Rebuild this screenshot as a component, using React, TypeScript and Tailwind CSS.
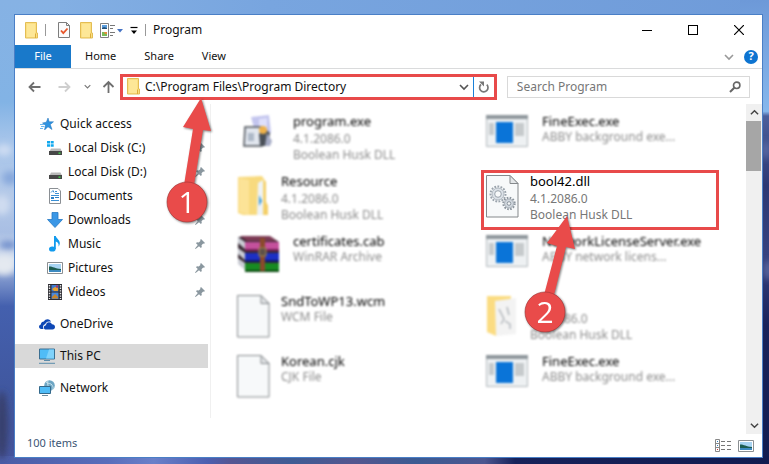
import type { ReactNode } from "react";

function Wallpaper() {
  return (
    <svg className="absolute inset-0 h-full w-full" viewBox="0 0 769 464" preserveAspectRatio="none" aria-hidden="true">
      <defs>
        <linearGradient id="sky" x1="0" y1="0" x2="1" y2="0">
          <stop offset="0" stopColor="#86b2e4" />
          <stop offset="0.35" stopColor="#78a5df" />
          <stop offset="1" stopColor="#6f9bd9" />
        </linearGradient>
        <linearGradient id="west" x1="0" y1="0" x2="0" y2="1">
          <stop offset="0" stopColor="#86b2e4" />
          <stop offset="0.22" stopColor="#82b3e5" />
          <stop offset="0.3" stopColor="#a5c4ea" />
          <stop offset="0.42" stopColor="#b4c9e8" />
          <stop offset="0.5" stopColor="#a9bfe4" />
          <stop offset="0.56" stopColor="#d5dfee" />
          <stop offset="0.6" stopColor="#7f97cd" />
          <stop offset="0.66" stopColor="#4460ae" />
          <stop offset="0.85" stopColor="#40579f" />
          <stop offset="1" stopColor="#46549c" />
        </linearGradient>
        <linearGradient id="east" x1="0" y1="0" x2="0" y2="1">
          <stop offset="0" stopColor="#6d99d8" />
          <stop offset="0.24" stopColor="#86b7ec" />
          <stop offset="0.25" stopColor="#4c5f9b" />
          <stop offset="0.4" stopColor="#2c3874" />
          <stop offset="0.55" stopColor="#36427f" />
          <stop offset="0.7" stopColor="#18235c" />
          <stop offset="1" stopColor="#121c50" />
        </linearGradient>
        <linearGradient id="ground" x1="0" y1="0" x2="1" y2="0">
          <stop offset="0" stopColor="#4a5ca6" />
          <stop offset="0.14" stopColor="#586dbb" />
          <stop offset="0.2" stopColor="#6a80c9" />
          <stop offset="0.27" stopColor="#4c5fb0" />
          <stop offset="0.3" stopColor="#555693" />
          <stop offset="0.38" stopColor="#3f5c94" />
          <stop offset="0.46" stopColor="#54568f" />
          <stop offset="0.54" stopColor="#3c5b92" />
          <stop offset="0.63" stopColor="#4c5690" />
          <stop offset="0.67" stopColor="#17225a" />
          <stop offset="1" stopColor="#111b50" />
        </linearGradient>
        <filter id="haze" x="-50%" y="-50%" width="200%" height="200%">
          <feGaussianBlur stdDeviation="3" />
        </filter>
      </defs>
      <rect width="769" height="464" fill="url(#sky)" />
      <rect width="60" height="464" fill="url(#west)" />
      <rect x="740" width="29" height="464" fill="url(#east)" />
      <rect y="456" width="769" height="8" fill="url(#ground)" />
      <g filter="url(#haze)">
        <ellipse cx="4" cy="150" rx="8" ry="6" fill="#cddcf2" />
        <ellipse cx="10" cy="178" rx="8" ry="7" fill="#88a9dc" />
        <ellipse cx="2" cy="205" rx="8" ry="10" fill="#cfdcf0" />
        <ellipse cx="8" cy="245" rx="9" ry="4" fill="#6d8ccb" />
        <ellipse cx="4" cy="265" rx="12" ry="10" fill="#e4e9f0" />
        <ellipse cx="2" cy="425" rx="6" ry="34" fill="#39406d" />
        <ellipse cx="766" cy="150" rx="4" ry="9" fill="#5a6aa5" />
        <ellipse cx="768" cy="270" rx="5" ry="10" fill="#56649c" />
      </g>
    </svg>
  );
}

function Folder() {
  return (
    <svg className="h-[17px] w-[13px] shrink-0" viewBox="0 0 13 17" aria-hidden="true">
      <path d="M.5.5h11v10.5h1v5H.5z" fill="#fbdf81" stroke="#e3bd54" />
      <path d="M2 2h8v13H2z" fill="#fde797" />
      <path d="M10.5 11.5v4.5" stroke="#dcae3c" />
    </svg>
  );
}

function CheckedPage() {
  return (
    <svg className="h-4 w-3" viewBox="0 0 12 16" aria-hidden="true">
      <path d="M.5.5h8l3 3v12H.5z" fill="#fbfbfb" stroke="#7d7d7d" />
      <path d="M8.500.500v3h3" fill="none" stroke="#7d7d7d" />
      <path d="M3 8.500l2.300 2.700L9.500 6.500" fill="none" stroke="#e8562a" strokeWidth="1.800" />
    </svg>
  );
}

function LayoutPicker() {
  return (
    <svg className="h-[15px] w-[23px]" viewBox="0 0 23 15" aria-hidden="true">
      <path d="M.5.5h8v14h-8z" fill="#fff" stroke="#808080" />
      <path d="M2 2h5v4H2z" fill="#5b9ddd" />
      <path d="M2 5l2-1 3 1v1H2z" fill="#24527a" />
      <path d="M2 9h5v4H2z" fill="#7dbb57" />
      <path d="M4 9h3v2H5z" fill="#e58b3a" />
      <path d="M10 2.500h5M10 5.500h3M10 9.500h5M10 12.500h3" stroke="#777" />
      <path d="M17 6h6l-3 3.500z" fill="#4472c4" />
    </svg>
  );
}

function Chevron({ up = false, size, color }: { up?: boolean; size: number; color: string }) {
  return (
    <svg width={size} height={size} viewBox="0 0 10 10" aria-hidden="true">
      <path d={up ? "M1 7l4-4 4 4" : "M1 3l4 4 4-4"} fill="none" stroke={color} strokeWidth="1.600" />
    </svg>
  );
}

function ArrowIcon({ kind, color }: { kind: "left" | "right" | "up"; color: string }) {
  const d = { left: "M12.500 7H1.500M6 2.500L1.500 7 6 11.500", right: "M.5 7h11M7 2.500L11.500 7 7 11.500", up: "M6.500 13V2M1.500 7l5-5 5 5" };
  return (
    <svg className="h-3.5 w-[13px]" viewBox="0 0 13 14" aria-hidden="true">
      <path d={d[kind]} fill="none" stroke={color} strokeWidth="1.800" />
    </svg>
  );
}

function Star() {
  return (
    <svg className="h-3 w-3.5" viewBox="0 0 14 12" aria-hidden="true">
      <path d="M8 0l1.200 3.800H13.500L10.300 6.500 12 11.500 8 8.800 4.500 12l1-4.700L2.500 5l3.800-.8z" fill="#2f93e0" stroke="#1b6fb8" strokeWidth=".5" />
      <path d="M0 6.500h4M1 8.500h3.500M0 10.500h3" stroke="#6bb7ee" />
    </svg>
  );
}

function Disk({ system = false }: { system?: boolean }) {
  return (
    <svg className="h-4 w-4" viewBox="0 0 16 16" aria-hidden="true">
      {system && <path d="M0 1h3v2.500H0zM3.700 1h3v2.500h-3zM0 4.300h3v2.500H0zM3.700 4.300h3v2.500h-3z" fill="#10a8ee" />}
      <path d="M4 8.500h9.500l1.500 3H2.500z" fill="#b9b9b9" />
      <path d="M2 11h13v4H2z" fill="#474747" />
      <path d="M11.500 12.500h2v1.300h-2z" fill="#3fe04a" />
    </svg>
  );
}

function DocumentIcon() {
  return (
    <svg className="h-4 w-4" viewBox="0 0 16 16" aria-hidden="true">
      <path d="M2.500.500h8.500l2.500 2.500v12.500h-11z" fill="#fff" stroke="#8a8f94" />
      <path d="M4 4.500l2-2 1 2M8 3.500h2M8 5.500h4M4 7.500h8M4 12.500h8" fill="none" stroke="#3a8fd4" />
      <path d="M4 9h3v2H4zM8 9h4v1H8z" fill="#2a7fc8" />
    </svg>
  );
}

function DownloadIcon() {
  return (
    <svg className="h-4 w-4" viewBox="0 0 16 16" aria-hidden="true">
      <path d="M5 .5h6v7h4.500L8 15.500.500 7.500H5z" fill="#3a97e6" stroke="#2579c4" strokeWidth=".8" />
    </svg>
  );
}

function MusicIcon() {
  return (
    <svg className="h-4 w-4" viewBox="0 0 16 16" aria-hidden="true">
      <ellipse cx="5.300" cy="13" rx="3.300" ry="2.600" fill="#129bee" />
      <path d="M7 0h1.800c.5 2.600 4.300 4 4 7.500-.1 1.600-1 2.700-1.300 3 .6-2.600-.3-4-2.700-5V13H7z" fill="#129bee" />
    </svg>
  );
}

function PictureIcon() {
  return (
    <svg className="h-4 w-4" viewBox="0 0 16 14" aria-hidden="true">
      <path d="M.5 1.500h15v11H.5z" fill="#fff" stroke="#8b8f92" />
      <path d="M2 3h12v8H2z" fill="#a8d4f2" />
      <path d="M2 5.500c4 0 6 2 12 2.500v1H2z" fill="#1c5c50" />
      <path d="M2 9h12v2H2z" fill="#3d8ac0" />
    </svg>
  );
}

function VideoIcon() {
  return (
    <svg className="h-4 w-4" viewBox="0 0 16 16" aria-hidden="true">
      <path d="M1 0h14v16H1z" fill="#2d2d33" />
      <path d="M4.500 1h7v6.500h-7z" fill="#3f7bd0" />
      <path d="M4.500 8.500h7V15h-7z" fill="#4a89dc" />
      <path d="M5 5l3-2 3 1v3H7z" fill="#e7a130" />
      <path d="M5 13l3-3 3 3v1.500H5z" fill="#c8862c" />
      <path d="M9 1.500h2v2H9z" fill="#b3315f" />
      <path d="M2.500 1v14M13.500 1v14" stroke="#e8e8e8" strokeWidth="1.400" strokeDasharray="1.400 1.200" />
    </svg>
  );
}

function CloudIcon() {
  return (
    <svg className="h-4 w-4" viewBox="0 0 16 16" aria-hidden="true">
      <path d="M4.500 13H2.300C.8 13 0 12 0 10.800 0 9.500.900 8.700 1.900 8.500c0-2 1.500-3 3-3C5.800 4 7 3.300 8.500 3.300c1.800 0 3 1 3.500 2.400-4-.8-5.300 1-5.700 2.500C4 8.500 3.500 11 4.500 13z" fill="#0d47b5" />
      <path d="M7 13.500c-1.300 0-2.200-.9-2.200-2.100 0-1.300 1-2.100 2.200-2.200.1-1.800 1.400-3 3-3 1.500 0 2.500.8 2.900 2.100 1.700-.1 3.100 1 3.100 2.700 0 1.500-1 2.500-2.500 2.500z" fill="#0d47b5" />
    </svg>
  );
}

function MonitorIcon() {
  return (
    <svg className="h-4 w-4" viewBox="0 0 16 16" aria-hidden="true">
      <path d="M.5 1h15v10H.5z" fill="#4fbcf7" stroke="#3a6f92" />
      <path d="M10 1.500h5v9H7z" fill="#7fd2fb" />
      <path d="M5 12.500h6M0 15.300h16" stroke="#5b8cab" />
    </svg>
  );
}

function NetworkIcon() {
  return (
    <svg className="h-4 w-4" viewBox="0 0 16 16" aria-hidden="true">
      <circle cx="10.500" cy="5.500" r="5.300" fill="#6ea6c4" />
      <path d="M7 2c2 2 5 1 6 3s2 3 0 5M9 .5c-1 3 0 6 2 10" fill="none" stroke="#c7e2ec" />
      <path d="M.5 6.500h11v7H.5z" fill="#4fbcf7" stroke="#34698b" />
      <path d="M3 15.500h6" stroke="#6d8da0" />
    </svg>
  );
}

function Pin() {
  return (
    <svg className="h-2.5 w-2.5" viewBox="0 0 10 10" aria-hidden="true">
      <path d="M6 0l4 4-1 .8-.8-.2-1.700 1.700.3 1.800-.9.900L4 7.200 .6 10l-.6-.6L2.800 6 1 4.200l.9-.9 1.800.3L5.400 1.900 5.200 1z" fill="#8a979f" />
    </svg>
  );
}

function SetupIcon() {
  return (
    <svg className="ml-1.5 h-9 w-9" viewBox="0 0 36 36" aria-hidden="true">
      <path d="M8 2l18-2 2 18-14 6z" fill="#c3c5ee" />
      <path d="M16 4l8-1v14l-8 3z" fill="#dfe0fb" />
      <path d="M2 12h17v19H1z" fill="#e1e6ee" stroke="#4c5158" strokeWidth="1.500" />
      <path d="M5 18h6v8H5z" fill="#aeb9c8" />
      <path d="M16 19l5-6 6 5-2 13h-8z" fill="#4a5058" />
      <circle cx="20" cy="15" r="4" fill="#efb24a" />
      <path d="M24 18l5 8-2 5h-5z" fill="#a6acc6" />
    </svg>
  );
}

function BigFolder({ sheets = false }: { sheets?: boolean }) {
  return sheets ? (
    <svg className="h-[42px] w-8" viewBox="0 0 32 42" aria-hidden="true">
      <path d="M1 1h24v6L10 41 1 37z" fill="#fbdc82" />
      <path d="M9 6l21-3v36l-20 2z" fill="#f3f3f3" />
      <path d="M13 14l5 10-3 5M21 12l2 8M19 26l5 3v5" fill="none" stroke="#a5abb1" strokeWidth="1.200" />
    </svg>
  ) : (
    <svg className="h-[42px] w-8" viewBox="0 0 32 42" aria-hidden="true">
      <path d="M1 2l24-1 4 6v20l2 4v9H6l-5-2z" fill="#f8da7e" />
      <path d="M2 3l10 2v35L2 37z" fill="#fce397" />
      <path d="M21 8l5-3v35h-6z" fill="#eef3f7" />
      <path d="M22 20l3 6-3 5z" fill="#3d9ad6" />
      <path d="M27 6v22l-1 12h5v-9l-2-4V7z" fill="#f4cf68" />
    </svg>
  );
}

function BooksIcon() {
  const rows = [
    { y: 7, c: "#c4519c", e: "#7a1f5c" },
    { y: 18, c: "#1d2fc4", e: "#0e1670" },
    { y: 28, c: "#188a22", e: "#0a4a10" },
  ];
  return (
    <svg className="h-[38px] w-11" viewBox="0 0 44 38" aria-hidden="true">
      <path d="M1 2h33l8 5v27H8L1 28z" fill="#3a2a34" />
      <path d="M3 1h30l7 5H10z" fill="#7d3a55" />
      {rows.map((r) => (
        <g key={r.y}>
          <path d={`M1 ${r.y - 5}l7 5v7l-7-6z`} fill="#c9ccd4" />
          <path d={`M8 ${r.y}h34v8H8z`} fill={r.c} />
          <path d={`M8 ${r.y + 7}h34v2H8z`} fill={r.e} />
        </g>
      ))}
      <path d="M23 3h5v33h-5z" fill="#8a4a2c" />
      <path d="M22 13h7v8h-7z" fill="#5d5048" stroke="#a88c50" />
    </svg>
  );
}

function Page({ children }: { children?: ReactNode }) {
  return (
    <svg className="h-[43px] w-[33px]" viewBox="0 0 33 43" aria-hidden="true">
      <path d="M.5.500h23.500l8 8v33.500H.5z" fill="#f7f9fa" stroke="#85898c" />
      <path d="M24 .5v8h8z" fill="#e3e6e8" stroke="#85898c" />
      {children}
    </svg>
  );
}

function Gears() {
  return (
    <g fill="none">
      <circle cx="12" cy="19" r="7.500" stroke="#9ba4ad" strokeWidth="2" strokeDasharray="1.800 1.340" />
      <circle cx="12" cy="19" r="6" fill="#dbe1e7" stroke="#b0b8c0" />
      <circle cx="12" cy="19" r="3.300" fill="#f7f9fa" stroke="#9ba4ad" />
      <circle cx="23" cy="28.500" r="5.700" stroke="#8c959e" strokeWidth="2" strokeDasharray="1.600 1.385" />
      <circle cx="23" cy="28.500" r="4.500" fill="#cfd6dd" stroke="#a5adb5" />
      <circle cx="23" cy="28.500" r="1.800" fill="#f7f9fa" stroke="#8c959e" />
    </g>
  );
}

function AppWindowIcon() {
  return (
    <svg className="h-8 w-[42px]" viewBox="0 0 42 32" aria-hidden="true">
      <path d="M.5.500h41v31H.5z" fill="#eef1f3" stroke="#b3b9bd" />
      <path d="M0 0h42v4H0z" fill="#8f979c" />
      <path d="M10 7h17v21H10z" fill="#0a74d8" />
      <path d="M3 8h5v12H3zM29 8h9v13h-9z" fill="#c6cacc" />
    </svg>
  );
}

const quick: { label: string; icon: ReactNode }[] = [
  { label: "Local Disk (C:)", icon: <Disk system /> },
  { label: "Local Disk (D:)", icon: <Disk /> },
  { label: "Documents", icon: <DocumentIcon /> },
  { label: "Downloads", icon: <DownloadIcon /> },
  { label: "Music", icon: <MusicIcon /> },
  { label: "Pictures", icon: <PictureIcon /> },
  { label: "Videos", icon: <VideoIcon /> },
];

function NavItem({ label, icon, active = false }: { label: string; icon: ReactNode; active?: boolean }) {
  return (
    <a href="#" className={`mr-0.5 flex h-6 items-center gap-[5px] pl-6 ${active ? "bg-[#d9d9d9]" : ""}`}>
      <span className="flex w-4 justify-center">{icon}</span>
      {label}
    </a>
  );
}

type Entry = { name: string; lines: string[]; icon: ReactNode; wide?: boolean; selected?: boolean };

const entries: Entry[] = [
  { name: "program.exe", lines: ["4.1.2086.0", "Boolean Husk DLL"], icon: <SetupIcon />, wide: true },
  { name: "FineExec.exe", lines: ["ABBY background exe..."], icon: <AppWindowIcon />, wide: true },
  { name: "Resource", lines: ["4.1.2086.0", "Boolean Husk DLL"], icon: <BigFolder /> },
  { name: "bool42.dll", lines: ["4.1.2086.0", "Boolean Husk DLL"], icon: <Page><Gears /></Page>, selected: true },
  { name: "certificates.cab", lines: ["WinRAR Archive"], icon: <BooksIcon />, wide: true },
  { name: "NetworkLicenseServer.exe", lines: ["ABBY network licens..."], icon: <AppWindowIcon />, wide: true },
  { name: "SndToWP13.wcm", lines: ["WCM File"], icon: <Page /> },
  { name: "", lines: ["4.1.2086.0", "Boolean Husk DLL"], icon: <BigFolder sheets /> },
  { name: "Korean.cjk", lines: ["CJK File"], icon: <Page /> },
  { name: "FineExec.exe", lines: ["ABBY background exe..."], icon: <AppWindowIcon />, wide: true },
];

function Tile({ entry, children }: { entry: Entry; children?: ReactNode }) {
  const { name, lines, icon, wide, selected } = entry;
  return (
    <li className={`relative flex h-[60px] border-[3px] pl-0.5 whitespace-nowrap ${selected ? "z-10 border-[#e84a4a] text-[#777]" : "border-transparent text-[#8c8c8c] blur-[1px]"}`}>
      <span className={`shrink-0 pt-0.5 ${wide ? "w-14" : "w-11"}`}>{icon}</span>
      <div className="text-[12px] leading-4">
        <p className="h-4 text-[13px] text-black">{name}</p>
        {lines.map((line, i) => (
          <p key={line} className={i === 0 && lines.length > 1 ? "mt-0.5" : ""}>{line}</p>
        ))}
      </div>
      {children}
    </li>
  );
}

function AddressPointer() {
  return (
    <svg className="pointer-events-none absolute top-[14px] left-[37px] h-[140px] w-[60px] drop-shadow-[1px_1px_1px_rgba(0,0,0,0.5)]" viewBox="160 90 60 140" role="img" aria-label="Step 1">
      <path d="M201 97l10 33-8-1-9 55h-10l9-56-10-2z" fill="#e94b4a" />
      <circle cx="187" cy="201" r="20" fill="#e94b4a" stroke="#a03434" strokeWidth=".6" />
      <text x="187" y="212" textAnchor="middle" className="fill-white font-['Open_Sans'] text-[30px]">1</text>
    </svg>
  );
}

function FilePointer() {
  return (
    <svg className="pointer-events-none absolute top-[37px] left-[31px] h-[130px] w-[70px] drop-shadow-[1px_1px_1px_rgba(0,0,0,0.5)]" viewBox="515 210 70 130" role="img" aria-label="Step 2">
      <path d="M567 216l8 33-9-2-12 48h-10l13-49-10-3z" fill="#e94b4a" />
      <circle cx="545" cy="312" r="20" fill="#e94b4a" stroke="#a03434" strokeWidth=".6" />
      <text x="545" y="323" textAnchor="middle" className="fill-white font-['Open_Sans'] text-[30px]">2</text>
    </svg>
  );
}

export default function App() {
  return (
    <div className="relative flex min-h-screen pt-3.5 pr-1.5 pb-1.5 pl-3.5 font-['Noto_Sans','Open_Sans',sans-serif] text-[12px] text-[#111]">
      <Wallpaper />
      <main className="relative flex flex-1 flex-col border border-[#4a7fc6] bg-white">
        <header className="flex h-[30px] items-center">
          <div className="flex items-center gap-[7px] pl-2.5">
            <Folder />
            <span className="h-3 w-px bg-[#999]" />
            <button aria-label="Properties" className="ml-[5px]"><CheckedPage /></button>
            <button aria-label="New folder" className="ml-[3px]"><Folder /></button>
            <button aria-label="Layout"><LayoutPicker /></button>
            <button aria-label="Customize toolbar">
              <svg className="h-2.5 w-2" viewBox="0 0 8 10" aria-hidden="true">
                <path d="M.5 2.500h7" stroke="#000" strokeWidth="1.200" />
                <path d="M1 5.500h6L4 9z" />
              </svg>
            </button>
            <span className="h-3 w-px bg-[#999]" />
            <h1>Program</h1>
          </div>
          <div className="ml-auto flex h-full">
            <button aria-label="Minimize" className="flex w-[46px] items-center justify-center"><span className="h-px w-2.5 bg-black" /></button>
            <button aria-label="Maximize" className="flex w-[46px] items-center justify-center"><span className="size-2.5 border border-black" /></button>
            <button aria-label="Close" className="flex w-[46px] items-center justify-center">
              <svg className="size-2.5" viewBox="0 0 10 10" aria-hidden="true"><path d="M0 0l10 10M10 0L0 10" stroke="#000" strokeWidth="1.200" /></svg>
            </button>
          </div>
        </header>

        <nav className="flex h-6 items-stretch border-b border-[#dadbdc] text-[11px]" aria-label="Ribbon">
          <button className="w-14 bg-[#1979ca] text-white">File</button>
          <button className="px-3.5">Home</button>
          <button className="px-3.5">Share</button>
          <button className="px-3.5">View</button>
          <div className="ml-auto flex items-center gap-2.5 pr-1">
            <button aria-label="Expand ribbon"><Chevron size={10} color="#999" /></button>
            <button aria-label="Help" className="flex size-3.5 items-center justify-center rounded-full bg-[#0d74d1] font-bold text-white">?</button>
          </div>
        </nav>

        <div className="flex h-[35px] items-center pr-3 pl-[13px]">
          <div className="flex w-[92px] shrink-0 items-center">
            <button aria-label="Back"><ArrowIcon kind="left" color="#6f6f6f" /></button>
            <button aria-label="Forward" className="ml-[17px]"><ArrowIcon kind="right" color="#cfcfcf" /></button>
            <button aria-label="Recent locations" className="ml-[13px]"><Chevron size={7} color="#777" /></button>
            <button aria-label="Up" className="ml-[11px]"><ArrowIcon kind="up" color="#6f6f6f" /></button>
          </div>
          <div className="relative z-20 flex h-[26px] flex-[18] items-center border-[3px] border-[#e84a4a] bg-white pl-1">
            <Folder />
            <input aria-label="Address" defaultValue="C:\Program Files\Program Directory" className="ml-[5px] min-w-0 flex-1 outline-none" />
            <button aria-label="Address history" className="mr-1"><Chevron size={10} color="#555" /></button>
            <button aria-label="Refresh" className="flex h-full w-[21px] items-center justify-center border-l border-[#1a80d8]">
              <svg className="h-3 w-[11px]" viewBox="0 0 11 12" aria-hidden="true">
                <path d="M8.800 3.700a4.200 4.200 0 1 1-5.800-.2" fill="none" stroke="#777" strokeWidth="1.700" />
                <path d="M1 .5h5v5z" fill="#777" />
              </svg>
            </button>
            <AddressPointer />
          </div>
          <label className="ml-2.5 flex h-[22px] flex-[11] items-center border border-[#d9d9d9] pr-2 pl-[9px]">
            <input type="search" aria-label="Search" placeholder="Search Program" className="min-w-0 flex-1 outline-none placeholder:text-[#777]" />
            <svg className="h-3 w-3" viewBox="0 0 12 12" aria-hidden="true">
              <circle cx="7.700" cy="4.300" r="3.200" fill="none" stroke="#666" strokeWidth="1.600" />
              <path d="M5.300 6.700L1 11" stroke="#666" strokeWidth="2" />
            </svg>
          </label>
        </div>

        <div className="flex flex-1">
          <aside className="mb-4 w-[196px] shrink-0 border-r border-[#f0f0f0] pt-2">
            <NavItem label="Quick access" icon={<Star />} />
            <ul>
              {quick.map((item) => (
                <li key={item.label}>
                  <a href="#" className="flex h-6 items-center gap-[5px] pr-[5px] pl-8">
                    {item.icon}
                    <span className="flex-1">{item.label}</span>
                    <Pin />
                  </a>
                </li>
              ))}
            </ul>
            <div className="flex flex-col gap-2 pt-2">
              <NavItem label="OneDrive" icon={<CloudIcon />} />
              <NavItem label="This PC" icon={<MonitorIcon />} active />
              <NavItem label="Network" icon={<NetworkIcon />} />
            </div>
          </aside>

          <ul className="grid min-w-0 flex-1 auto-rows-[60px] grid-cols-2 gap-x-[11px] pt-1.5 pr-[27px] pl-[21px]">
            {entries.map((entry, i) => (
              <Tile key={i} entry={entry}>{entry.selected && <FilePointer />}</Tile>
            ))}
          </ul>

          <div className="flex w-4 shrink-0 flex-col bg-[#f0f0f0]">
            <button aria-label="Scroll up" className="flex h-[17px] items-center justify-center"><Chevron up size={9} color="#444" /></button>
            <div className="mr-px h-[50px] bg-[#a6a6a6]" />
            <button aria-label="Scroll down" className="mt-auto flex h-[17px] items-center justify-center"><Chevron size={9} color="#444" /></button>
          </div>
        </div>

        <footer className="flex h-[23px] items-center pr-2 pb-1 pl-3 text-[11px] text-[#3b5575]">
          <p>100 items</p>
          <div className="ml-auto flex items-center gap-[7px] pt-1">
            <button aria-label="Details view">
              <svg className="h-[13px] w-4" viewBox="0 0 16 13" aria-hidden="true">
                <path d="M.5.500h4v12h-4zM.5 4.500h4M.5 8.500h4" fill="#fff" stroke="#888" />
                <path d="M6 2.500h4M12 2.500h4M6 6.500h4M12 6.500h4M6 10.500h4M12 10.500h4" stroke="#777" />
                <path d="M2 2h1v1H2zM2 6h1v1H2z" fill="#2f7fc0" />
                <path d="M2 10h1v1H2z" fill="#d03030" />
              </svg>
            </button>
            <button aria-label="Thumbnail view"><PictureIcon /></button>
          </div>
        </footer>
      </main>
    </div>
  );
}
